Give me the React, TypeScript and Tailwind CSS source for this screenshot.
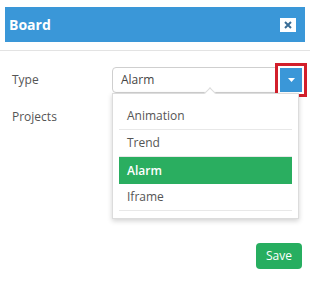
import { useState } from 'react';

const options = ['Animation', 'Trend', 'Alarm', 'Iframe'];

export default function App() {
  const [selected, setSelected] = useState('Alarm');

  return (
    <div className="w-[310px] h-[282px] bg-white relative overflow-hidden" style={{ fontFamily: '"Open Sans", "Noto Sans", sans-serif' }}>
      {/* header */}
      <div className="mx-[5px] mt-[7px] h-[35px] bg-[#3a97d8] flex items-center justify-between pl-[4px] pr-[9px]">
        <span className="text-white font-bold text-[14px]">Board</span>
        <button className="w-[16px] h-[14px] bg-white flex items-center justify-center">
          <svg width="8" height="8" viewBox="0 0 8 8">
            <path d="M1 1 L7 7 M7 1 L1 7" stroke="#3a6d96" strokeWidth="2" />
          </svg>
        </button>
      </div>
      <div className="mt-[8px] h-px bg-[#e3e3e3]" />

      {/* form */}
      <div className="pl-[12px] pr-[6px] pt-[16px]">
        <div className="flex items-center h-[26px]">
          <span className="w-[100px] text-[12px] text-[#555]">Type</span>
          <div className="relative flex-1 flex items-center">
            <div className="flex-1 h-[26px] border border-[#cfcfcf] rounded-l-[4px] flex items-center px-[8px] text-[12px] text-[#444]">
              {selected}
            </div>
            <div className="ml-[-1px] border-[3px] border-[#d21f2b] p-[2px] mr-[-3px]">
              <div className="w-[22px] h-[24px] bg-[#3a97d8] flex items-center justify-center">
                <svg width="7" height="4" viewBox="0 0 7 4">
                  <path d="M0 0 L7 0 L3.5 4 Z" fill="white" />
                </svg>
              </div>
            </div>
          </div>
        </div>
        <div className="flex items-center h-[26px] mt-[11px]">
          <span className="text-[12px] text-[#555]">Projects</span>
        </div>
      </div>

      {/* footer */}
      <div className="flex justify-end pr-[8px] mt-[113px]">
        <button className="w-[46px] h-[26px] rounded-[4px] bg-[#27ae60] text-white text-[12px]">Save</button>
      </div>

      {/* dropdown */}
      <div className="absolute left-[112px] top-[93px] w-[187px] bg-white border border-[#dcdcdc] shadow-[0_2px_5px_rgba(0,0,0,0.18)] px-[6px] pt-[9px] pb-[7px]">
        <div className="absolute -top-[5px] left-[93px] w-[8px] h-[8px] bg-white border-l border-t border-[#dcdcdc] rotate-45" />
        {options.map((o) => (
          <div
            key={o}
            onClick={() => setSelected(o)}
            className={
              o === 'Alarm'
                ? 'h-[27px] flex items-center px-[8px] text-[12px] text-white bg-[#2aae60] font-semibold'
                : 'h-[27px] flex items-center px-[8px] text-[12px] text-[#555] border-b border-[#e8e8e8]'
            }
          >
            {o}
          </div>
        ))}
      </div>
    </div>
  );
}
